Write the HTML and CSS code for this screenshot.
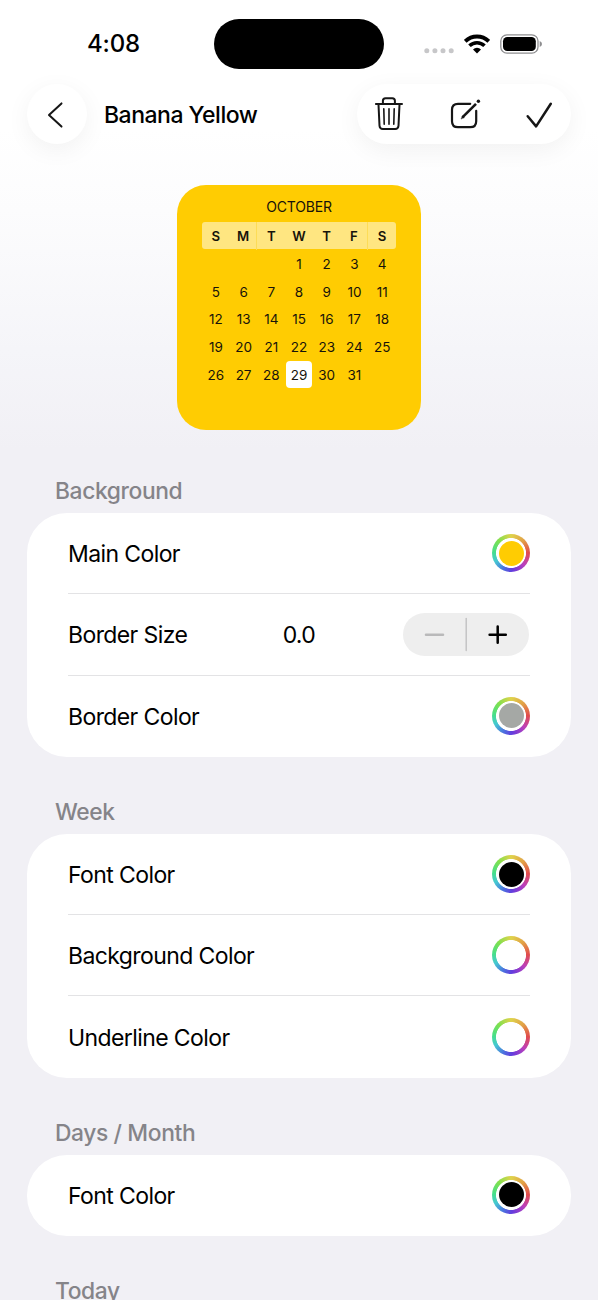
FILE: index.html
```html
<!DOCTYPE html>
<html lang="en">
<head>
<meta charset="utf-8">
<title>Banana Yellow</title>
<link rel="stylesheet" href="styles.css">
</head>
<body>
<div class="screen">
  <div class="status">
    <div class="time">4:08</div>
    <div class="island"></div>
    <div class="indicators">
      <svg class="dots" width="32" height="8" viewBox="0 0 32 8" fill="#c7c7c9"><circle cx="3.8" cy="3.8" r="2.5"/><circle cx="11.9" cy="3.8" r="2.5"/><circle cx="20" cy="3.8" r="2.5"/><circle cx="28.2" cy="3.8" r="2.5"/></svg>
      <svg class="wifi" width="26" height="20" viewBox="0 0 26 20" fill="none" stroke="#000"><path d="M1.2 7.3a16.8 16.8 0 0 1 23.6 0" stroke-width="3.9"/><path d="M5.5 11.8a10.7 10.7 0 0 1 15 0" stroke-width="3.6"/><path d="M9 15.4a5.7 5.7 0 0 1 8 0L13 19.4z" fill="#000" stroke="none"/></svg>
      <svg class="battery" width="43" height="20" viewBox="0 0 43 20"><rect x=".8" y=".8" width="37.2" height="18.4" rx="6.2" fill="#fff" stroke="#8e8e90" stroke-width="1.3"/><rect x="3" y="3" width="32.8" height="14" rx="4.3"/><path d="M39.7 7q2.3 1.2 2.3 3t-2.3 3z" fill="#8e8e90"/></svg>
    </div>
  </div>

  <div class="navbar">
    <div class="back"><svg width="60" height="60" viewBox="0 0 60 60" fill="none" stroke="#161616" stroke-width="2" stroke-linecap="round" stroke-linejoin="round"><path d="M34.5 19.4 22 31 34.5 42.6"/></svg></div>
    <div class="title">Banana Yellow</div>
    <div class="actions">
      <svg width="214" height="60" viewBox="0 0 214 60" fill="none" stroke="#161616" stroke-width="2" stroke-linecap="round" stroke-linejoin="round">
        <path d="M18.9 20H45M25.9 19.5v-2.7q0-2.6 2.6-2.6h6.8q2.6 0 2.6 2.6v2.7M21.5 20.5l1 21.2q.2 3.2 3.3 3.2h12.4q3.1 0 3.3-3.2l1-21.2"/>
        <path d="m26.8 24.8.4 15.4M32 24.8v15.4M37.2 24.8l-.4 15.4" stroke-width="1.6"/>
        <path d="M113.2 19.8H101q-6 0-6 6v11.4q0 6 6 6h12.2q6 0 6-6V26.8" stroke-width="2.2"/>
        <path d="m105.4 33.4 13.6-13.6" stroke-width="2.6" stroke-linecap="butt"/><path d="m104.2 34.7 1.4-2.9 1.5 1.5z" fill="#161616" stroke-width=".5"/><circle cx="121.4" cy="17.3" r="1.7" fill="#161616" stroke="none"/>
        <path d="m170.7 32.3 8.4 10.1 14.7-22.7" stroke-width="2.5"/>
      </svg>
    </div>
  </div>

  <div class="preview">
    <div class="month">OCTOBER</div>
    <div class="week week-head"><span>S</span><span class="split">M</span><span>T</span><span>W</span><span>T</span><span class="split">F</span><span>S</span></div>
    <div class="week days">
      <span></span><span></span><span></span><span>1</span><span>2</span><span>3</span><span>4</span>
      <span>5</span><span>6</span><span>7</span><span>8</span><span>9</span><span>10</span><span>11</span>
      <span>12</span><span>13</span><span>14</span><span>15</span><span>16</span><span>17</span><span>18</span>
      <span>19</span><span>20</span><span>21</span><span>22</span><span>23</span><span>24</span><span>25</span>
      <span>26</span><span>27</span><span>28</span><span class="today">29</span><span>30</span><span>31</span><span></span>
    </div>
  </div>

  <div class="section">
    <h2 class="heading">Background</h2>
    <div class="card">
      <div class="row"><span class="label">Main Color</span><span class="well"><i class="dot yellow"></i></span></div>
      <div class="row"><span class="label">Border Size</span><span class="value">0.0</span>
        <div class="stepper"><svg width="126" height="43" viewBox="0 0 126 43" fill="none" stroke-width="2.5" stroke-linecap="round"><path d="M23 21.7h17" stroke="#b9b9ba"/><path d="M63.2 5.5v32" stroke="#c0c0c1" stroke-width="1.4"/><path d="M86.6 21.7h16.2M94.7 13.6v16.2" stroke="#000"/></svg></div>
      </div>
      <div class="row"><span class="label">Border Color</span><span class="well"><i class="dot gray"></i></span></div>
    </div>
  </div>

  <div class="section">
    <h2 class="heading">Week</h2>
    <div class="card">
      <div class="row"><span class="label">Font Color</span><span class="well"><i class="dot black"></i></span></div>
      <div class="row"><span class="label">Background Color</span><span class="well"></span></div>
      <div class="row"><span class="label">Underline Color</span><span class="well"></span></div>
    </div>
  </div>

  <div class="section">
    <h2 class="heading">Days / Month</h2>
    <div class="card">
      <div class="row"><span class="label">Font Color</span><span class="well"><i class="dot black"></i></span></div>
    </div>
  </div>

  <div class="section">
    <h2 class="heading">Today</h2>
  </div>
</div>
</body>
</html>
```
FILE: styles.css
```css
* { box-sizing: border-box; }
body { margin: 0; font-family: Inter, "Liberation Sans", sans-serif; color: #000; }
svg { display: block; flex: none; }
.screen {
  width: 598px; height: 1300px; overflow: hidden;
  background: linear-gradient(#fff 0, #fff 130px, #fcfcfd 210px, #f5f5f9 350px, #f1f0f5 450px);
}
.status { display: flex; height: 84px; padding: 19px 0 0 87px; }
.time { width: 127px; padding-top: 10px; font-size: 24px; line-height: 30px; font-weight: 550; letter-spacing: -.2px; }
.island { width: 170px; height: 50px; border-radius: 25px; background: #000; }
.indicators { display: flex; padding: 15px 0 0 39px; }
.dots { margin-top: 13px; }
.wifi { margin-left: 9px; }
.battery { margin-left: 10px; }
.navbar { display: flex; height: 60px; padding: 0 27px; align-items: center; }
.back, .actions { flex: none; background: #fff; border-radius: 30px; box-shadow: 0 6px 24px rgba(0,0,0,.055); }
.back { width: 60px; height: 60px; }
.actions { width: 214px; height: 60px; margin-left: auto; }
.title { margin-left: 17px; padding-top: 2px; font-size: 23px; line-height: 30px; font-weight: 550; letter-spacing: -.5px; white-space: nowrap; }

.preview { width: 244px; height: 245px; margin: 41px auto 0 177px; padding: 12px 25px 0; background: #ffcc02; border-radius: 29px; color: #17130a; }
.month { height: 20px; line-height: 20px; font-size: 14px; text-align: center; letter-spacing: -.2px; }
.week { display: grid; grid-template-columns: repeat(7, 1fr); text-align: center; font-size: 13.5px; }
.week-head { height: 27px; margin-top: 5px; line-height: 28px; font-size: 13.2px; font-weight: 600; background: #ffe681; border-radius: 3px; }
.split { border-right: 1px solid #fddc57; }
.days { grid-auto-rows: 27.7px; line-height: 29px; padding-top: 1px; }
.today { width: 26px; height: 27px; margin: .5px auto; line-height: 28px; background: #fff; border-radius: 4px; }

.section { display: flow-root; }
.heading { margin: 0 0 0 55px; height: 77px; padding-top: 40px; line-height: 30px; font-size: 22.8px; font-weight: 550; letter-spacing: -.38px; color: #858489; white-space: nowrap; }
.preview + .section .heading { height: 83px; padding-top: 46px; }
.card { width: 544px; margin-left: 27px; padding: 0 41px; background: #fff; border-radius: 40px; }
.row { display: flex; height: 81.3px; align-items: center; justify-content: space-between; border-bottom: 1px solid #e3e3e5; }
.row:last-child { border-bottom-color: transparent; }
.label { padding-top: 2px; font-size: 23px; line-height: 30px; letter-spacing: -.6px; white-space: nowrap; }
.value { width: 32px; margin-left: 7px; padding-top: 2px; font-size: 23px; letter-spacing: -.7px; }
.stepper { width: 126px; height: 43px; margin-top: 1px; margin-right: 1px; border-radius: 22px; background: #eee; }
.well {
  display: grid; place-items: center; width: 38px; height: 38px; border-radius: 50%; flex: none;
  background: radial-gradient(circle, #fff 14.6px, transparent 15.3px),
    conic-gradient(#dfd34b, #e2a147 45deg, #e14c4b 88deg, #bd3fba 130deg, #643bdd 176deg, #4c70df 205deg, #45c9d2 242deg, #47df88 275deg, #7fe04e 315deg, #dfd34b);
}
.dot { width: 25px; height: 25px; border-radius: 50%; }
.yellow { background: #ffcc02; }
.gray { background: #a5a8a5; }
.black { background: #000; }
```
